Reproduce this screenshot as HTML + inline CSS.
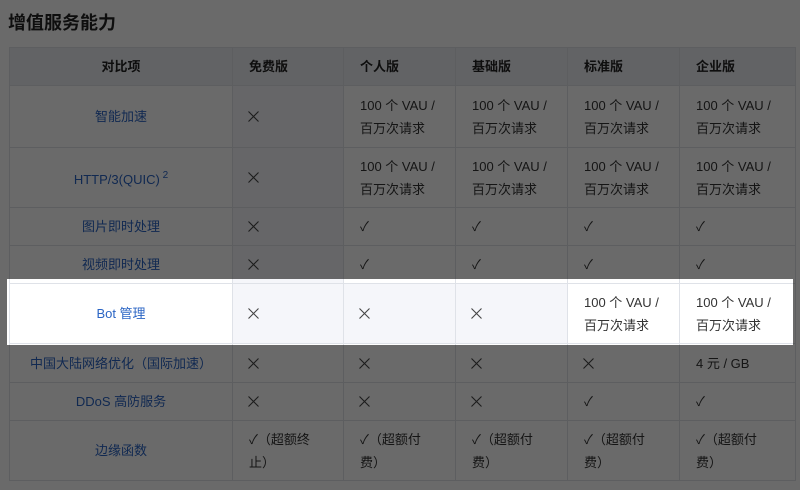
<!DOCTYPE html>
<html><head><meta charset="utf-8"><style>
*{margin:0;padding:0;box-sizing:border-box}
body{width:800px;height:490px;background:#fff;font-family:"Liberation Sans","Noto Sans CJK SC",sans-serif;color:#333;font-size:13px;position:relative;overflow:hidden}
h2{position:absolute;left:8px;top:9px;font-size:18px;font-weight:bold;color:#222;font-family:"Liberation Sans","Noto Sans CJK SC",sans-serif}
table{position:absolute;left:9px;top:47px;width:786px;border-collapse:collapse;table-layout:fixed}
td,th{border:1px solid #dfe2e8;padding:0 0 0 16px;text-align:left;line-height:23px;font-weight:normal}
th{background:#eceef3;height:38px;font-weight:bold;color:#222}
td.f,th.f{text-align:center;padding:0}
td.f{color:#2a64c4}
.g{background:#f5f6fa}
sup{font-size:10px;vertical-align:6px}
.x{display:inline-block;width:11px;height:11px;vertical-align:-1px;margin-left:-1px}
.hl{position:absolute;left:7px;top:279px;width:786px;height:66px;box-shadow:0 0 0 2000px rgba(0,0,0,.585)}
</style></head><body>
<svg width="0" height="0" style="position:absolute"><symbol id="x" viewBox="0 0 11 11"><path d="M0.5 0.5L10.5 10.5M10.5 0.5L0.5 10.5" stroke="#444" stroke-width="1.1" fill="none"/></symbol></svg>
<h2>增值服务能力</h2>
<table>
<colgroup><col style="width:223px"><col style="width:111px"><col style="width:112px"><col style="width:112px"><col style="width:112px"><col style="width:116px"></colgroup>
<tr><th class="f">对比项</th><th>免费版</th><th>个人版</th><th>基础版</th><th>标准版</th><th>企业版</th></tr>
<tr style="height:62px"><td class="f">智能加速</td><td class="g"><svg class="x"><use href="#x"/></svg></td><td>100 个 VAU /<br>百万次请求</td><td>100 个 VAU /<br>百万次请求</td><td>100 个 VAU /<br>百万次请求</td><td>100 个 VAU /<br>百万次请求</td></tr>
<tr style="height:60px"><td class="f">HTTP/3(QUIC)<sup> 2</sup></td><td class="g"><svg class="x"><use href="#x"/></svg></td><td>100 个 VAU /<br>百万次请求</td><td>100 个 VAU /<br>百万次请求</td><td>100 个 VAU /<br>百万次请求</td><td>100 个 VAU /<br>百万次请求</td></tr>
<tr style="height:38px"><td class="f">图片即时处理</td><td class="g"><svg class="x"><use href="#x"/></svg></td><td>✓</td><td>✓</td><td>✓</td><td>✓</td></tr>
<tr style="height:38px"><td class="f">视频即时处理</td><td class="g"><svg class="x"><use href="#x"/></svg></td><td>✓</td><td>✓</td><td>✓</td><td>✓</td></tr>
<tr style="height:60px"><td class="f">Bot 管理</td><td class="g"><svg class="x"><use href="#x"/></svg></td><td class="g"><svg class="x"><use href="#x"/></svg></td><td class="g"><svg class="x"><use href="#x"/></svg></td><td>100 个 VAU /<br>百万次请求</td><td>100 个 VAU /<br>百万次请求</td></tr>
<tr style="height:39px"><td class="f">中国大陆网络优化（国际加速）</td><td><svg class="x"><use href="#x"/></svg></td><td><svg class="x"><use href="#x"/></svg></td><td><svg class="x"><use href="#x"/></svg></td><td><svg class="x"><use href="#x"/></svg></td><td>4 元 / GB</td></tr>
<tr style="height:38px"><td class="f">DDoS 高防服务</td><td><svg class="x"><use href="#x"/></svg></td><td><svg class="x"><use href="#x"/></svg></td><td><svg class="x"><use href="#x"/></svg></td><td>✓</td><td>✓</td></tr>
<tr style="height:60px"><td class="f">边缘函数</td><td>✓（超额终<br>止）</td><td>✓（超额付<br>费）</td><td>✓（超额付<br>费）</td><td>✓（超额付<br>费）</td><td>✓（超额付<br>费）</td></tr>
</table>
<div class="hl"></div>
</body></html>
